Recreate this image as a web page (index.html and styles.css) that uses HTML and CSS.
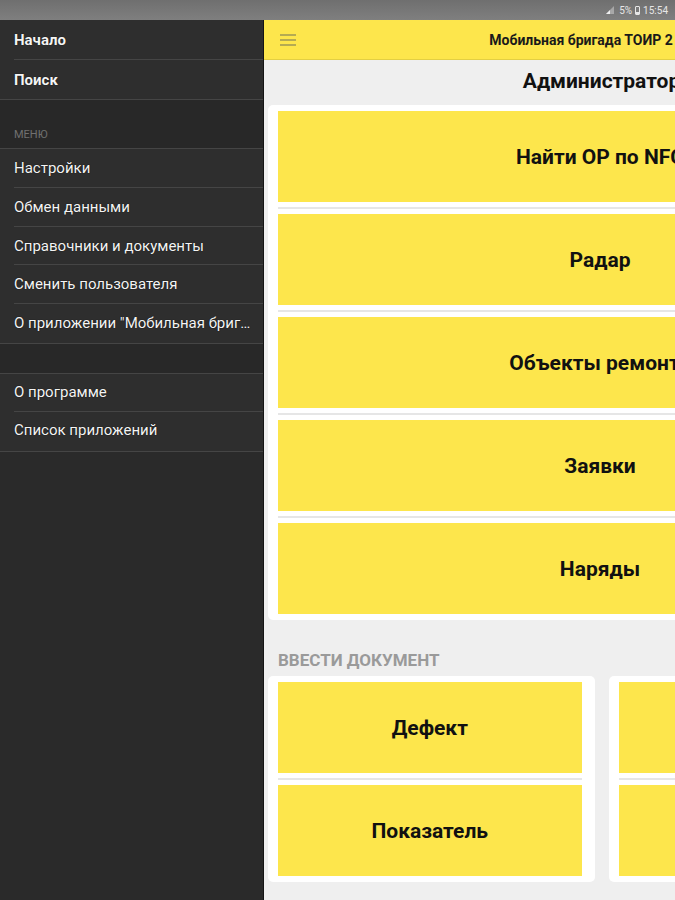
FILE: index.html
```html
<!DOCTYPE html>
<html lang="ru">
<head>
<meta charset="utf-8">
<title>Мобильная бригада ТОИР 2</title>
<link rel="stylesheet" href="styles.css">
</head>
<body>
<div class="statusbar">
  <span class="signal">
    <svg width="8" height="8" viewBox="0 0 8 8"><path d="M0 8 L8 8 L8 0 Z" fill="#d8d8d8" opacity="0.5"/><path d="M0 8 L4 8 L4 4 Z" fill="#eee"/></svg>
  </span>
  <span class="st-text">5%</span>
  <span class="battery"></span>
  <span class="st-text">15:54</span>
</div>
<div class="app">
  <nav class="drawer">
    <div class="group top">
      <div class="item bold">Начало</div>
      <div class="item bold last">Поиск</div>
    </div>
    <div class="section-title">МЕНЮ</div>
    <div class="group">
      <div class="item">Настройки</div>
      <div class="item">Обмен данными</div>
      <div class="item">Справочники и документы</div>
      <div class="item">Сменить пользователя</div>
      <div class="item last">О приложении "Мобильная бригада ТОИР 2"</div>
    </div>
    <div class="spacer"></div>
    <div class="group bottom">
      <div class="item">О программе</div>
      <div class="item last">Список приложений</div>
    </div>
  </nav>
  <main class="content">
    <header class="topbar">
      <span class="menu-icon">
        <svg width="17" height="13" viewBox="0 0 17 13"><g stroke="#a39c55" stroke-width="1.6"><line x1="0" y1="1" x2="16" y2="1"/><line x1="0" y1="6" x2="16" y2="6"/><line x1="0" y1="11" x2="16" y2="11"/></g></svg>
      </span>
      <span class="topbar-title">Мобильная бригада ТОИР 2 КОРП</span>
    </header>
    <h1 class="role">Администратор</h1>
    <section class="card">
      <div class="btn">Найти ОР по NFC</div>
      <div class="sep"></div>
      <div class="btn">Радар</div>
      <div class="sep"></div>
      <div class="btn">Объекты ремонта</div>
      <div class="sep"></div>
      <div class="btn">Заявки</div>
      <div class="sep"></div>
      <div class="btn">Наряды</div>
    </section>
    <div class="label">ВВЕСТИ ДОКУМЕНТ</div>
    <div class="cards-row">
      <section class="card">
        <div class="btn">Дефект</div>
        <div class="sep"></div>
        <div class="btn">Показатель</div>
      </section>
      <section class="card">
        <div class="btn">Замер</div>
        <div class="sep"></div>
        <div class="btn">Работа</div>
      </section>
    </div>
  </main>
</div>
</body>
</html>
```
FILE: styles.css
```css
* { box-sizing: border-box; }
html, body { margin: 0; padding: 0; }
body {
  width: 675px;
  height: 900px;
  overflow: hidden;
  font-family: Roboto, "Liberation Sans", Arial, sans-serif;
  background: #efefef;
}
.statusbar {
  height: 20px;
  background: linear-gradient(#6f6f6f, #7f7f7f);
  display: flex;
  justify-content: flex-end;
  align-items: center;
  gap: 3px;
  padding-right: 7px;
  color: #e6e6e6;
  font-size: 10px;
}
.signal { display: flex; align-items: center; margin-right: 2px; }
.battery {
  width: 5px;
  height: 9px;
  border: 1px solid #e6e6e6;
  background: linear-gradient(#7a7a7a 70%, #e6e6e6 70%);
  border-radius: 1px;
}
.app {
  display: flex;
  height: 880px;
}
.drawer {
  width: 264px;
  flex-shrink: 0;
  background: #2a2a2a;
  border-right: 1px solid #141414;
  color: #f4f4f4;
  font-size: 15px;
  position: relative;
  z-index: 2;
}
.group { background: #2e2e2e; border-bottom: 1px solid #454545; }
.item {
  height: 38.8px;
  line-height: 38px;
  padding: 0 6px 0 14px;
  white-space: nowrap;
  overflow: hidden;
  text-overflow: ellipsis;
  position: relative;
  text-shadow: 0 0 1px #000;
}
.group.top .item { height: 39.5px; line-height: 41px; }
.group.bottom .item { height: 38.5px; line-height: 37px; }
.item::after {
  content: "";
  position: absolute;
  left: 14px;
  right: 0;
  bottom: 0;
  height: 1px;
  background: #454545;
}
.item.last::after { display: none; }
.item.bold { font-weight: 700; }
.section-title {
  height: 49px;
  padding: 28px 14px 0;
  font-size: 11px;
  color: #707070;
  background: #282828;
  border-bottom: 1px solid #454545;
}
.spacer {
  height: 30px;
  background: #282828;
  border-bottom: 1px solid #454545;
}
.content {
  width: 675px;
  flex-shrink: 0;
  background: #efefef;
  padding: 0 4px;
}
.topbar {
  height: 40px;
  margin: 0 -4px;
  background: #fde64c;
  border-bottom: 1px solid #e3cf43;
  display: flex;
  align-items: center;
  position: relative;
  padding-left: 16px;
}
.menu-icon { display: flex; margin-top: 1px; }
.topbar-title {
  position: absolute;
  left: 0;
  right: 0;
  text-align: center;
  font-size: 14px;
  font-weight: 700;
  color: #1a1a1a;
}
.role {
  margin: 0;
  height: 45px;
  padding-top: 9px;
  text-align: center;
  font-size: 21px;
  font-weight: 700;
  color: #111;
}
.card {
  background: #fff;
  border-radius: 5px;
  padding: 6px 13px 6px 10px;
}
.btn {
  height: 91px;
  background: #fde64c;
  display: flex;
  align-items: center;
  justify-content: center;
  font-size: 21px;
  font-weight: 700;
  color: #111;
}
.sep {
  height: 12px;
  display: flex;
  align-items: center;
}
.sep::before {
  content: "";
  display: block;
  width: 100%;
  height: 2px;
  background: #e6e6e6;
}
.label {
  height: 56px;
  padding: 30px 10px 0;
  font-size: 17px;
  font-weight: 700;
  color: #9a9a9a;
}
.cards-row {
  display: grid;
  grid-template-columns: 1fr 1fr;
  gap: 14px;
}
```
